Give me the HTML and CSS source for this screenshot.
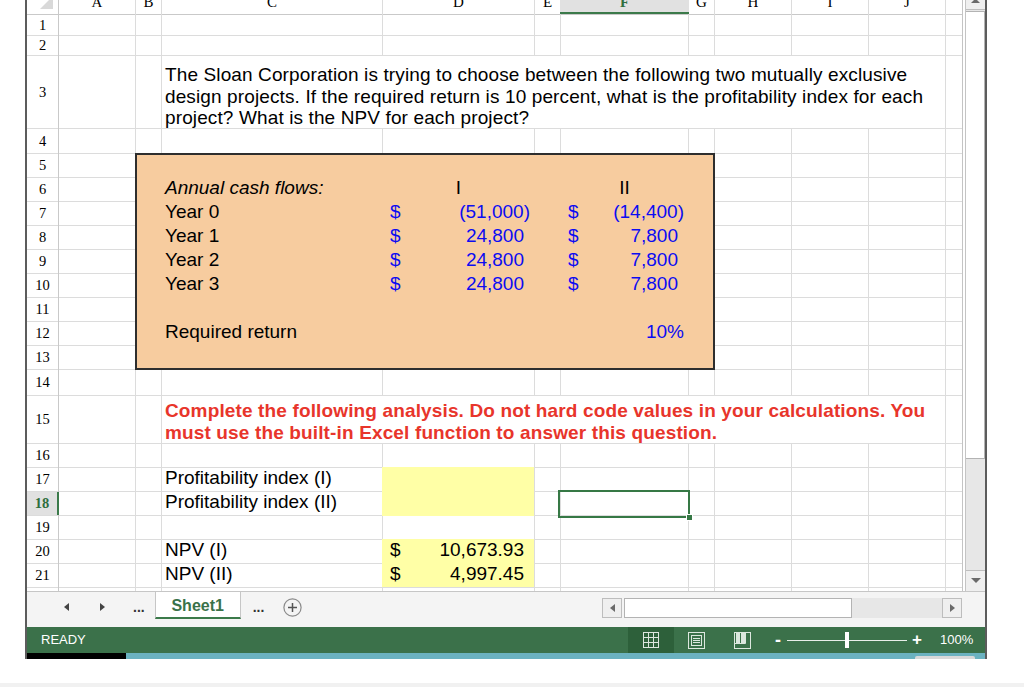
FILE: index.html
```html
<!DOCTYPE html>
<html>
<head>
<meta charset="utf-8">
<link rel="stylesheet" href="styles.css">
</head>
<body>
<div class="app">
  <div class="main">
    <div class="sheet">
      <div class="corner r1 c1"><svg width="31" height="14" viewBox="0 0 31 14"><path d="M13 9H26V-4Z" fill="#d9d9d9"/></svg></div>
      <div class="ch c2">A</div>
      <div class="ch c3">B</div>
      <div class="ch c4">C</div>
      <div class="ch c5">D</div>
      <div class="ch c6">E</div>
      <div class="ch c7 chsel">F</div>
      <div class="ch c8">G</div>
      <div class="ch c9">H</div>
      <div class="ch c10">I</div>
      <div class="ch c11">J</div>

      <div class="rn r2">1</div>
      <div class="rn r3">2</div>
      <div class="rn r4">3</div>
      <div class="rn r5">4</div>
      <div class="rn r6">5</div>
      <div class="rn r7">6</div>
      <div class="rn r8">7</div>
      <div class="rn r9">8</div>
      <div class="rn r10">9</div>
      <div class="rn r11">10</div>
      <div class="rn r12">11</div>
      <div class="rn r13">12</div>
      <div class="rn r14">13</div>
      <div class="rn r15">14</div>
      <div class="rn r16">15</div>
      <div class="rn r17">16</div>
      <div class="rn r18">17</div>
      <div class="rn r19 rnsel">18</div>
      <div class="rn r20">19</div>
      <div class="rn r21">20</div>
      <div class="rn r22">21</div>

      <div class="merged r4"><div class="mtext">The Sloan Corporation is trying to choose between the following two mutually exclusive design projects. If the required return is 10 percent, what is the profitability index for each project? What is the NPV for each project?</div></div>

      <div class="box"></div>
      <div class="t it r7 c4">Annual cash flows:</div>
      <div class="t ctr r7 c5">I</div>
      <div class="t ctr r7 c7">II</div>

      <div class="t r8 c4">Year 0</div>
      <div class="t num blue r8 c5"><span>$</span><span>(51,000)</span></div>
      <div class="t num blue r8 c7"><span>$</span><span>(14,400)</span></div>

      <div class="t r9 c4">Year 1</div>
      <div class="t num blue r9 c5"><span>$</span><span class="p">24,800</span></div>
      <div class="t num blue r9 c7"><span>$</span><span class="p">7,800</span></div>

      <div class="t r10 c4">Year 2</div>
      <div class="t num blue r10 c5"><span>$</span><span class="p">24,800</span></div>
      <div class="t num blue r10 c7"><span>$</span><span class="p">7,800</span></div>

      <div class="t r11 c4">Year 3</div>
      <div class="t num blue r11 c5"><span>$</span><span class="p">24,800</span></div>
      <div class="t num blue r11 c7"><span>$</span><span class="p">7,800</span></div>

      <div class="t r13 c4">Required return</div>
      <div class="t right blue r13 c7">10%</div>

      <div class="merged r16"><div class="mtext red">Complete the following analysis. Do not hard code values in your calculations. You must use the built-in Excel function to answer this question.</div></div>

      <div class="t r18 c4">Profitability index (I)</div>
      <div class="yellow ya"></div>
      <div class="t r19 c4">Profitability index (II)</div>
      <div class="sel r19 c7"><span class="handle"></span></div>

      <div class="yellow yb"></div>
      <div class="t r21 c4">NPV (I)</div>
      <div class="t num r21 c5"><span>$</span><span class="p">10,673.93</span></div>
      <div class="t r22 c4">NPV (II)</div>
      <div class="t num r22 c5"><span>$</span><span class="p">4,997.45</span></div>
    </div>
    <div class="vspace"></div>
    <div class="vscroll">
      <div class="vbtn-up"><svg width="19" height="9" viewBox="0 0 19 9"><path d="M5 3H14L11 0H8Z" fill="#6a6a6a"/></svg></div>
      <div class="vthumb"></div>
      <div class="vtrack"></div>
      <div class="vbtn-down"><svg width="10" height="6" viewBox="0 0 10 6"><path d="M0 0H10L5 5Z" fill="#6a6a6a"/></svg></div>
    </div>
  </div>

  <div class="tabbar">
    <svg class="navl" width="5" height="8" viewBox="0 0 5 8"><path d="M5 0L0 4L5 8Z" fill="#444"/></svg>
    <svg class="navr" width="5" height="8" viewBox="0 0 5 8"><path d="M0 0L5 4L0 8Z" fill="#444"/></svg>
    <span class="dots d1">...</span>
    <div class="tab">Sheet1</div>
    <span class="dots d2">...</span>
    <svg class="addsheet" width="19" height="19" viewBox="0 0 19 19"><circle cx="9.5" cy="9.5" r="8.6" fill="none" stroke="#8a8a8a" stroke-width="1.2"/><path d="M9.5 5v9M5 9.5h9" stroke="#555" stroke-width="1.5"/></svg>
    <div class="hscroll">
      <div class="hbtn"><svg width="5" height="8" viewBox="0 0 5 8"><path d="M5 0L0 4L5 8Z" fill="#6a6a6a"/></svg></div>
      <div class="hthumb"></div>
      <div class="htrack"></div>
      <div class="hbtn"><svg width="5" height="8" viewBox="0 0 5 8"><path d="M0 0L5 4L0 8Z" fill="#6a6a6a"/></svg></div>
    </div>
  </div>

  <div class="status">
    <div class="ready">READY</div>
    <div class="vbtn normal"><svg width="16" height="16" viewBox="0 0 16 16"><rect x="0.5" y="0.5" width="15" height="15" fill="none" stroke="#dce7de"/><path d="M5.5 0.5V15.5M10.5 0.5V15.5M0.5 5.5H15.5M0.5 10.5H15.5" stroke="#dce7de"/></svg></div>
    <div class="vbtn layout"><svg width="17" height="17" viewBox="0 0 17 17"><rect x="0.5" y="0.5" width="16" height="16" fill="none" stroke="#dce7de"/><rect x="3.5" y="3.5" width="10" height="10" fill="none" stroke="#dce7de"/><path d="M5 6.5H12M5 8.5H12M5 10.5H12" stroke="#dce7de"/></svg></div>
    <div class="vbtn pbreak"><svg width="17" height="17" viewBox="0 0 17 17"><rect x="0.5" y="0.5" width="16" height="16" fill="none" stroke="#dce7de"/><rect x="2" y="1" width="4" height="10" fill="#dce7de"/><rect x="7" y="1" width="4" height="10" fill="#dce7de"/><path d="M11.5 1V11.5H1" fill="none" stroke="#dce7de"/></svg></div>
    <div class="zminus">-</div>
    <div class="slider"><span class="sthumb"></span></div>
    <div class="zplus">+</div>
    <div class="zpct">100%</div>
  </div>

  <div class="strip"><span class="strip-dark"></span><span class="strip-tip"></span></div>
</div>
<div class="pagefoot"></div>
</body>
</html>
```

FILE: styles.css
```css
* { box-sizing: border-box; }

body {
  margin: 0;
  background: #fff;
  font-family: "Liberation Sans", Arial, sans-serif;
  color: #000;
}

.app {
  margin-left: 25px;
  width: 962px;
  height: 659px;
  border-left: 2px solid #5c5c5c;
  border-right: 2px solid #5c5c5c;
  display: flex;
  flex-direction: column;
}

.main {
  display: flex;
  height: 591px;
}

.sheet {
  width: 936px;
  height: 591px;
  border-right: 1px solid #c4c4c4;
  display: grid;
  grid-template-columns: 31px 76px 25px 220px 151px 25px 127px 25px 76px 76px 76px 16px;
  grid-template-rows: 14px 20px 19px 72px 24px repeat(9, 23px) 25px 47px repeat(6, 23px) 3px;
  gap: 1px;
  overflow: hidden;
  background:
    linear-gradient(90deg,
      #0000 0 31px, #c9c9c9 0 32px,
      #0000 0 108px, #dcdcdc 0 109px,
      #0000 0 134px, #dcdcdc 0 135px,
      #0000 0 355px, #dcdcdc 0 356px,
      #0000 0 507px, #dcdcdc 0 508px,
      #0000 0 533px, #dcdcdc 0 534px,
      #0000 0 661px, #dcdcdc 0 662px,
      #0000 0 687px, #dcdcdc 0 688px,
      #0000 0 764px, #dcdcdc 0 765px,
      #0000 0 841px, #dcdcdc 0 842px,
      #0000 0 918px, #dcdcdc 0 919px,
      #0000 0),
    linear-gradient(180deg,
      #0000 0 14px, #c9c9c9 0 15px,
      #0000 0 35px, #dcdcdc 0 36px,
      #0000 0 55px, #dcdcdc 0 56px,
      #0000 0 128px, #dcdcdc 0 129px,
      #0000 0 153px, #dcdcdc 0 154px,
      #0000 0 177px, #dcdcdc 0 178px,
      #0000 0 201px, #dcdcdc 0 202px,
      #0000 0 225px, #dcdcdc 0 226px,
      #0000 0 249px, #dcdcdc 0 250px,
      #0000 0 273px, #dcdcdc 0 274px,
      #0000 0 297px, #dcdcdc 0 298px,
      #0000 0 321px, #dcdcdc 0 322px,
      #0000 0 345px, #dcdcdc 0 346px,
      #0000 0 369px, #dcdcdc 0 370px,
      #0000 0 395px, #dcdcdc 0 396px,
      #0000 0 443px, #dcdcdc 0 444px,
      #0000 0 467px, #dcdcdc 0 468px,
      #0000 0 491px, #dcdcdc 0 492px,
      #0000 0 515px, #dcdcdc 0 516px,
      #0000 0 539px, #dcdcdc 0 540px,
      #0000 0 563px, #dcdcdc 0 564px,
      #0000 0 587px, #dcdcdc 0 588px,
      #0000 0),
    #fff;
}

/* grid placement helpers */
.r1 { grid-row: 1; } .r2 { grid-row: 2; } .r3 { grid-row: 3; } .r4 { grid-row: 4; }
.r5 { grid-row: 5; } .r6 { grid-row: 6; } .r7 { grid-row: 7; } .r8 { grid-row: 8; }
.r9 { grid-row: 9; } .r10 { grid-row: 10; } .r11 { grid-row: 11; } .r12 { grid-row: 12; }
.r13 { grid-row: 13; } .r14 { grid-row: 14; } .r15 { grid-row: 15; } .r16 { grid-row: 16; }
.r17 { grid-row: 17; } .r18 { grid-row: 18; } .r19 { grid-row: 19; } .r20 { grid-row: 20; }
.r21 { grid-row: 21; } .r22 { grid-row: 22; }
.c1 { grid-column: 1; } .c2 { grid-column: 2; } .c3 { grid-column: 3; } .c4 { grid-column: 4; }
.c5 { grid-column: 5; } .c6 { grid-column: 6; } .c7 { grid-column: 7; } .c8 { grid-column: 8; }
.c9 { grid-column: 9; } .c10 { grid-column: 10; } .c11 { grid-column: 11; }

.corner svg { display: block; }

.ch {
  grid-row: 1;
  font-family: "Liberation Serif", "Times New Roman", serif;
  font-size: 15px;
  line-height: 4px;
  text-align: center;
}
.chsel {
  background: #e1e1e1;
  color: #2f6f3e;
  font-weight: bold;
  border-bottom: 2px solid #3b7a4a;
  margin: 0 -1px;
}

.rn {
  grid-column: 1;
  font-family: "Liberation Serif", "Times New Roman", serif;
  font-size: 14.5px;
  display: flex;
  align-items: center;
  justify-content: center;
}
.rnsel {
  background: #e1e1e1;
  color: #2f6f3e;
  font-weight: bold;
  border-right: 2px solid #3b7a4a;
  margin-right: -1px;
}

.merged {
  grid-column: 4 / 12;
  background: #fff;
  display: flex;
  flex-direction: column;
}
.mtext {
  padding: 8px 0 0 3px;
  font-size: 19px;
  line-height: 21.5px;
  letter-spacing: 0.12px;
}
.mtext.red {
  padding: 4px 0 0 3px;
  line-height: 22px;
  color: #e8352b;
  font-weight: bold;
  letter-spacing: 0.14px;
}

.box {
  grid-column: 3 / 9;
  grid-row: 6 / 15;
  margin: -1px;
  background: #f7cc9f;
  border: 2px solid #2e2e2e;
}

.t {
  font-size: 19px;
  line-height: 19px;
  padding-left: 3px;
  white-space: nowrap;
}
.it { font-style: italic; }
.blue { color: #0c0cf2; }
.ctr { text-align: center; padding-left: 0; }
.num {
  display: flex;
  justify-content: space-between;
  padding: 0 4px 0 7px;
}
.num .p { padding-right: 6px; }
.right { text-align: right; padding-right: 4px; }

.yellow { background: #ffffa6; }
.ya { grid-column: 5; grid-row: 18 / 20; margin: -1px 0 -1px -1px; }
.yb { grid-column: 5; grid-row: 21 / 23; margin: -1px 0 0 -1px; }

.sel {
  position: relative;
  border: 2px solid #367845;
  margin: -2px -2px -3px -3px;
}
.handle {
  position: absolute;
  right: -5px;
  bottom: -5px;
  width: 7px;
  height: 7px;
  background: #367845;
  border: 1px solid #fff;
}

/* vertical scrollbar */
.vspace { width: 2px; }
.vscroll {
  width: 20px;
  border-left: 1px solid #c4c4c4;
  display: flex;
  flex-direction: column;
  background: #e7e7e7;
}
.vbtn-up {
  height: 10px;
  background: #efefef;
  border-bottom: 1px solid #bdbdbd;
}
.vbtn-up svg { display: block; }
.vthumb {
  margin-top: 1px;
  height: 448px;
  background: #fff;
  border: 1px solid #b3b3b3;
  border-left: 0;
}
.vtrack { flex: 1; }
.vbtn-down {
  height: 21px;
  background: #efefef;
  border-top: 1px solid #bdbdbd;
  display: flex;
  justify-content: center;
  padding-top: 7px;
}
.vbtn-down svg { display: block; }

/* sheet tabs */
.tabbar {
  height: 36px;
  border-top: 1px solid #c6c6c6;
  background: #f4f4f4;
  display: flex;
  align-items: flex-start;
}
.navl { margin: 11px 0 0 37px; }
.navr { margin: 11px 0 0 31px; }
.dots {
  font-size: 14px;
  font-weight: bold;
  color: #333;
  line-height: 20px;
  margin-top: 5px;
}
.d1 { margin-left: 28px; }
.tab {
  margin-left: 10px;
  width: 86px;
  height: 27px;
  padding-top: 2px;
  background: #fff;
  border-left: 1px solid #c6c6c6;
  border-right: 1px solid #c6c6c6;
  border-bottom: 2px solid #3b7a4a;
  text-align: center;
  font-size: 16px;
  line-height: 23px;
  font-weight: bold;
  color: #3a7249;
}
.d2 { margin-left: 12px; }
.addsheet { margin: 6px 0 0 19px; }

.hscroll {
  margin: 6px 23px 0 auto;
  width: 360px;
  height: 20px;
  display: flex;
}
.hbtn {
  width: 20px;
  height: 20px;
  background: #efefef;
  border: 1px solid #bdbdbd;
  display: flex;
  align-items: center;
  justify-content: center;
}
.hthumb {
  margin-left: 2px;
  width: 228px;
  background: #fff;
  border: 1px solid #b3b3b3;
}
.htrack { flex: 1; background: #e7e7e7; }

/* status bar */
.status {
  height: 26px;
  background: #3b714a;
  display: flex;
  align-items: center;
  color: #fff;
  font-size: 13px;
}
.ready { flex: 1; padding-left: 14px; line-height: 26px; }
.vbtn { display: flex; align-items: center; justify-content: center; height: 26px; }
.vbtn svg { display: block; }
.normal { width: 46px; background: #2d603a; }
.layout { width: 17px; margin-left: 14px; }
.pbreak { width: 17px; margin-left: 29px; }
.zminus { width: 6px; margin-left: 24px; font-size: 18px; font-weight: bold; line-height: 26px; }
.slider {
  width: 120px;
  margin-left: 6px;
  height: 1px;
  background: #e8efe9;
  position: relative;
}
.sthumb {
  position: absolute;
  left: 58px;
  top: -8px;
  width: 4px;
  height: 16px;
  background: #fff;
}
.zplus { width: 9px; margin-left: 5px; font-size: 17px; font-weight: bold; line-height: 26px; }
.zpct { width: 33px; margin-left: 19px; margin-right: 12px; line-height: 26px; }

.strip {
  height: 6px;
  background: #6bb2c0;
  display: flex;
}
.strip-dark { width: 99px; background: #000; }
.strip-tip {
  margin: 3px 0 0 789px;
  width: 60px;
  height: 3px;
  background: #d9d9d9;
  border-radius: 2px 2px 0 0;
}

.pagefoot {
  margin-top: 24px;
  height: 4px;
  background: #f1f1f1;
}
```
